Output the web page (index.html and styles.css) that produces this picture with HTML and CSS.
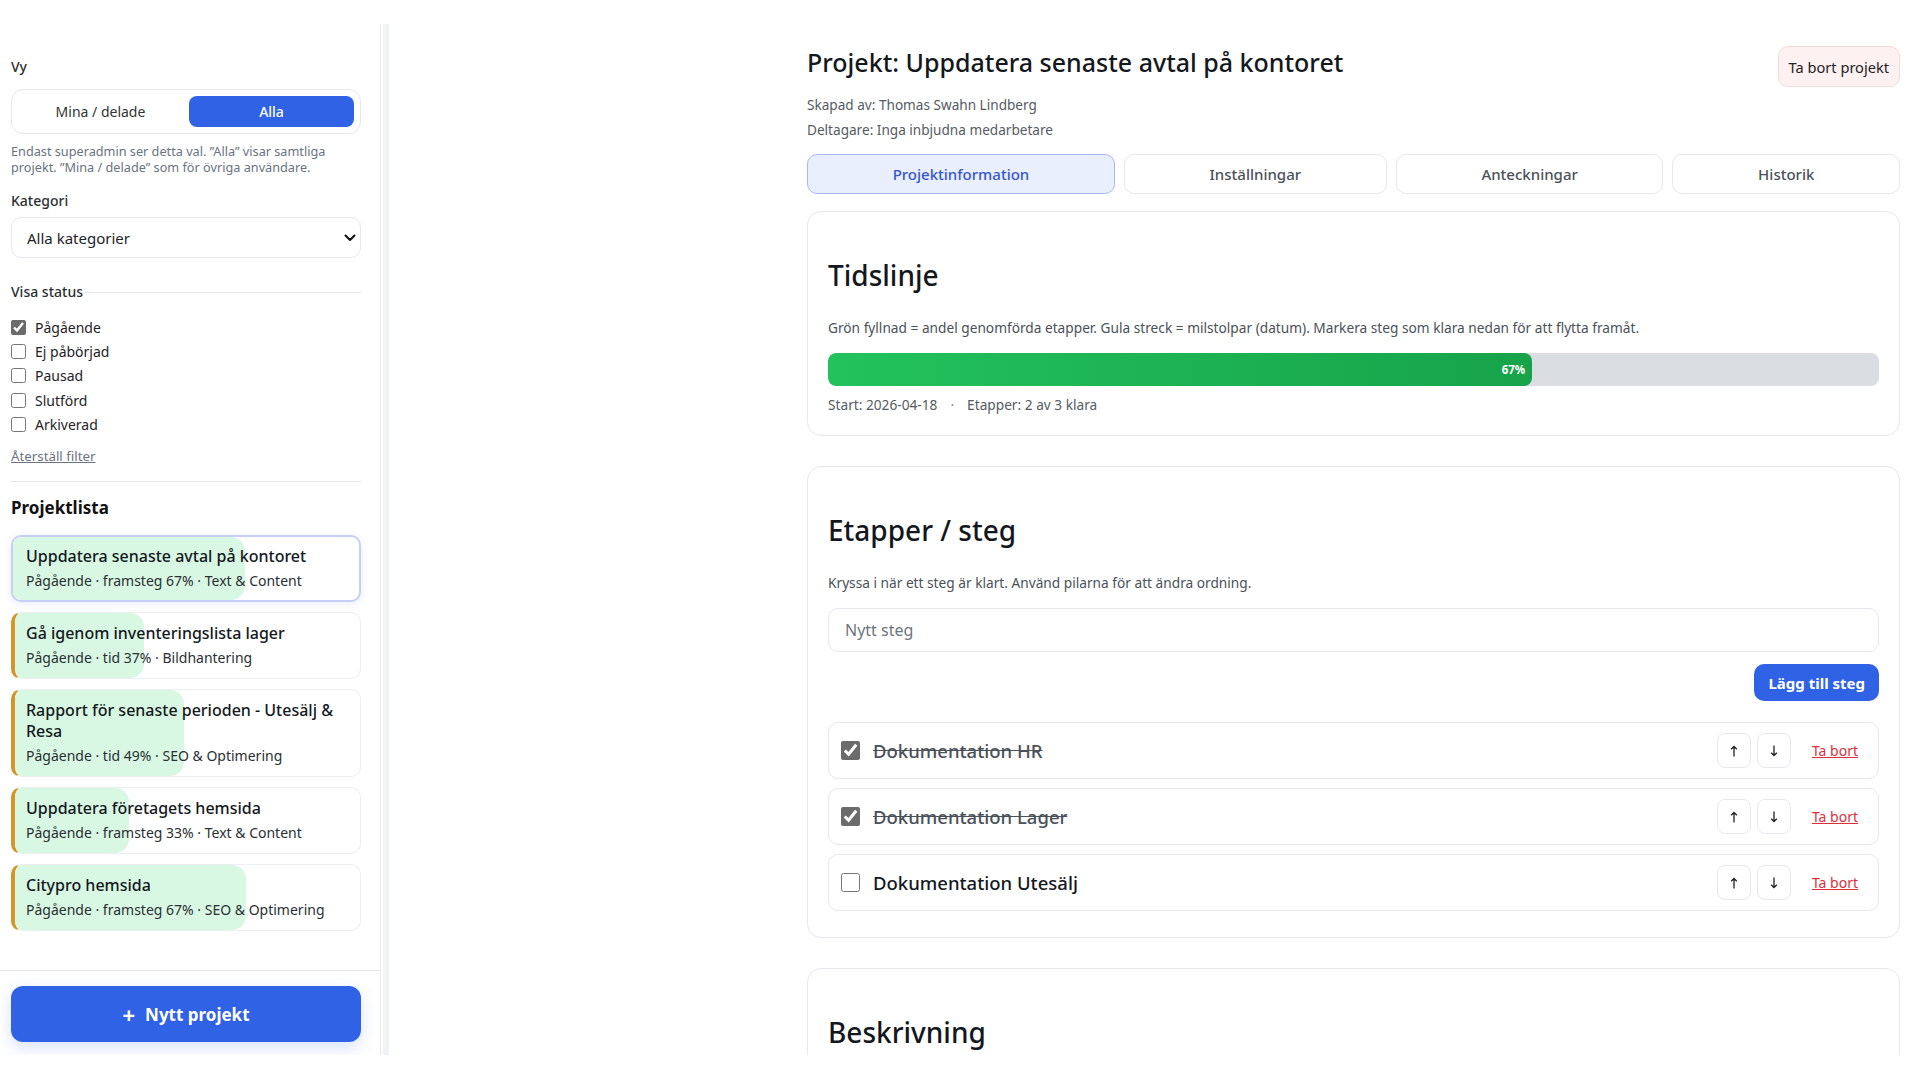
FILE: index.html
```html
<!DOCTYPE html>
<html lang="sv">
<head>
<meta charset="utf-8">
<title>Projekt</title>
<link rel="stylesheet" href="styles.css">
</head>
<body>
<div class="app">
  <aside class="sidebar">
    <div class="side-scroll">
      <div class="label">Vy</div>
      <div class="segmented">
        <button class="seg">Mina / delade</button>
        <button class="seg active">Alla</button>
      </div>
      <p class="help">Endast superadmin ser detta val. ”Alla” visar samtliga projekt. ”Mina / delade” som för övriga användare.</p>

      <div class="label kat">Kategori</div>
      <div class="select-wrap">
        <select class="select"><option>Alla kategorier</option></select>
        <svg class="chev" width="12" height="8" viewBox="0 0 12 8"><path d="M1.5 1.5 6 6l4.5-4.5" fill="none" stroke="#111" stroke-width="2" stroke-linecap="round" stroke-linejoin="round"/></svg>
      </div>

      <fieldset class="status">
        <legend>Visa status</legend>
        <label class="chk"><input type="checkbox" checked> Pågående</label>
        <label class="chk"><input type="checkbox"> Ej påbörjad</label>
        <label class="chk"><input type="checkbox"> Pausad</label>
        <label class="chk"><input type="checkbox"> Slutförd</label>
        <label class="chk"><input type="checkbox"> Arkiverad</label>
      </fieldset>
      <a class="reset" href="#">Återställ filter</a>
      <hr class="sep">

      <h3 class="list-title">Projektlista</h3>
      <div class="plist">
        <div class="pcard active">
          <div class="pfill" style="width:67%"></div>
          <div class="ptitle">Uppdatera senaste avtal på kontoret</div>
          <div class="psub">Pågående · framsteg 67% · Text &amp; Content</div>
        </div>
        <div class="pcard">
          <div class="pfill" style="width:37.5%"></div>
          <div class="ptitle">Gå igenom inventeringslista lager</div>
          <div class="psub">Pågående · tid 37% · Bildhantering</div>
        </div>
        <div class="pcard">
          <div class="pfill" style="width:49%"></div>
          <div class="ptitle">Rapport för senaste perioden - Utesälj &amp; Resa</div>
          <div class="psub">Pågående · tid 49% · SEO &amp; Optimering</div>
        </div>
        <div class="pcard">
          <div class="pfill" style="width:33%"></div>
          <div class="ptitle">Uppdatera företagets hemsida</div>
          <div class="psub">Pågående · framsteg 33% · Text &amp; Content</div>
        </div>
        <div class="pcard">
          <div class="pfill" style="width:67%"></div>
          <div class="ptitle">Citypro hemsida</div>
          <div class="psub">Pågående · framsteg 67% · SEO &amp; Optimering</div>
        </div>
      </div>
    </div>
    <div class="side-foot">
      <button class="new-btn"><span class="plus">+</span>Nytt projekt</button>
    </div>
  </aside>
  <div class="rail"></div>

  <main class="main">
    <div class="content">
      <header class="head">
        <div>
          <h1 class="title">Projekt: Uppdatera senaste avtal på kontoret</h1>
          <div class="meta">
            <div>Skapad av: Thomas Swahn Lindberg</div>
            <div>Deltagare: Inga inbjudna medarbetare</div>
          </div>
        </div>
        <button class="del-btn">Ta bort projekt</button>
      </header>

      <nav class="tabs">
        <button class="tab active">Projektinformation</button>
        <button class="tab">Inställningar</button>
        <button class="tab">Anteckningar</button>
        <button class="tab">Historik</button>
      </nav>

      <section class="card">
        <h2>Tidslinje</h2>
        <p class="desc">Grön fyllnad = andel genomförda etapper. Gula streck = milstolpar (datum). Markera steg som klara nedan för att flytta framåt.</p>
        <div class="bar">
          <div class="bar-fill" style="width:67%"><span>67%</span></div>
        </div>
        <div class="bar-meta"><span>Start: 2026-04-18</span><span class="dot">·</span><span>Etapper: 2 av 3 klara</span></div>
      </section>

      <section class="card">
        <h2>Etapper / steg</h2>
        <p class="desc">Kryssa i när ett steg är klart. Använd pilarna för att ändra ordning.</p>
        <input class="step-input" type="text" placeholder="Nytt steg">
        <div class="add-row"><button class="add-btn">Lägg till steg</button></div>
        <div class="steps">
          <div class="step">
            <input type="checkbox" checked>
            <span class="step-text done">Dokumentation HR</span>
            <div class="step-actions">
              <button class="arrow" aria-label="Upp"><svg width="8" height="12" viewBox="0 0 8 12"><path d="M4 11.5V1.5M1.2 4.3 4 1.5l2.8 2.8" fill="none" stroke="#222" stroke-width="1.3"/></svg></button>
              <button class="arrow" aria-label="Ner"><svg width="8" height="12" viewBox="0 0 8 12"><path d="M4 .5v10M1.2 7.7 4 10.5l2.8-2.8" fill="none" stroke="#222" stroke-width="1.3"/></svg></button>
              <a class="remove" href="#">Ta bort</a>
            </div>
          </div>
          <div class="step">
            <input type="checkbox" checked>
            <span class="step-text done">Dokumentation Lager</span>
            <div class="step-actions">
              <button class="arrow" aria-label="Upp"><svg width="8" height="12" viewBox="0 0 8 12"><path d="M4 11.5V1.5M1.2 4.3 4 1.5l2.8 2.8" fill="none" stroke="#222" stroke-width="1.3"/></svg></button>
              <button class="arrow" aria-label="Ner"><svg width="8" height="12" viewBox="0 0 8 12"><path d="M4 .5v10M1.2 7.7 4 10.5l2.8-2.8" fill="none" stroke="#222" stroke-width="1.3"/></svg></button>
              <a class="remove" href="#">Ta bort</a>
            </div>
          </div>
          <div class="step">
            <input type="checkbox">
            <span class="step-text">Dokumentation Utesälj</span>
            <div class="step-actions">
              <button class="arrow" aria-label="Upp"><svg width="8" height="12" viewBox="0 0 8 12"><path d="M4 11.5V1.5M1.2 4.3 4 1.5l2.8 2.8" fill="none" stroke="#222" stroke-width="1.3"/></svg></button>
              <button class="arrow" aria-label="Ner"><svg width="8" height="12" viewBox="0 0 8 12"><path d="M4 .5v10M1.2 7.7 4 10.5l2.8-2.8" fill="none" stroke="#222" stroke-width="1.3"/></svg></button>
              <a class="remove" href="#">Ta bort</a>
            </div>
          </div>
        </div>
      </section>

      <section class="card">
        <h2>Beskrivning</h2>
        <p class="desc">&nbsp;</p>
      </section>
    </div>
  </main>
</div>
</body>
</html>
```

FILE: styles.css
```css
* { box-sizing: border-box; }
html, body { margin: 0; padding: 0; background: #fff; overflow: hidden; }
body {
  font-family: "Segoe UI", "Noto Sans", "Open Sans", sans-serif;
  color: #1f2328;
}
button, input, select { font-family: inherit; }

.app { display: flex; height: 1055px; overflow: hidden; }

/* Sidebar */
.sidebar {
  width: 381px;
  flex: none;
  margin-top: 24px;
  border-right: 1px solid #e6e8eb;
  display: flex;
  flex-direction: column;
}
.rail { width: 6px; flex: none; margin: 24px 0 0 2px; background: #f1f2f3; }
.side-scroll { flex: 1; overflow: hidden; padding: 33px 19px 0 11px; }
.label { font-size: 14px; line-height: 20px; font-weight: 500; color: #2b2f33; }
.label.kat { margin-top: 16px; }
.segmented {
  margin-top: 12px;
  height: 45px;
  border: 1px solid #e6e8eb;
  border-radius: 12px;
  padding: 6px;
  display: grid;
  grid-template-columns: 1fr 1fr;
  gap: 6px;
}
.seg {
  border: none; background: transparent; border-radius: 8px;
  font-size: 14px; color: #333; cursor: pointer;
}
.seg.active { background: #2f62e4; color: #fff; font-weight: 500; }
.help { margin: 9px 0 0; font-size: 12.7px; line-height: 16px; color: #6b7280; }
.select-wrap { position: relative; margin-top: 6px; }
.select {
  appearance: none; -webkit-appearance: none;
  width: 100%; height: 41px;
  border: 1px solid #e6e8eb; border-radius: 10px;
  background: #fff; padding: 0 15px;
  font-size: 15px; color: #1f2328;
}
.chev { position: absolute; right: 5px; top: 17px; }
.status { margin: 24px 0 0; padding: 0; border: none; border-top: 1px solid #e6e8eb; min-width: 0; }
.status legend { padding: 0 2px 0 0; font-size: 14px; line-height: 20px; font-weight: 500; color: #2b2f33; }
.chk {
  display: flex; align-items: center; gap: 9px;
  height: 24.3px; font-size: 14px; color: #1f2328;
}
.status .chk:first-of-type { margin-top: 13px; }
.chk input { width: 15px; height: 15px; margin: 0; accent-color: #6b6b6b; }
.reset { display: inline-block; margin-top: 10px; font-size: 13.3px; line-height: 20px; color: #6b7280; }
.sep { margin: 15px 0 0; border: none; border-top: 1px solid #e6e8eb; }
.list-title { margin: 14px 0 0; font-size: 17px; line-height: 24px; font-weight: 700; color: #111; }
.plist { margin-top: 15px; display: flex; flex-direction: column; gap: 10px; }
.pcard {
  position: relative;
  overflow: hidden;
  border: 1px solid #eceef1;
  border-left: 4px solid #d4962a;
  border-radius: 10px;
  padding: 10px 12px 10px 11px;
  background: #fff;
}
.pcard.active {
  border: 2px solid #c6cff6;
  padding: 9px 11px 9px 13px;
  box-shadow: 0 2px 8px rgba(80, 100, 220, 0.12);
}
.pfill {
  position: absolute; left: 0; top: 0; bottom: 0;
  background: #d8f8e3;
  border-radius: 0 14px 14px 0;
}
.ptitle, .psub { position: relative; }
.ptitle { font-size: 16px; line-height: 21px; font-weight: 500; color: #15191e; }
.psub { margin-top: 4px; font-size: 14px; line-height: 20px; color: #2b2f33; }
.side-foot { border-top: 1px solid #e6e8eb; padding: 15px 19px 13px 11px; }
.new-btn {
  width: 100%; height: 56px;
  border: none; border-radius: 12px;
  background: #2f62e4; color: #fff;
  font-size: 17px; font-weight: 700;
  box-shadow: 0 6px 16px rgba(47, 98, 228, 0.18);
  display: flex; align-items: center; justify-content: center;
}
.plus { font-size: 22px; font-weight: 700; margin-right: 10px; line-height: 1; }

/* Main */
.main { flex: 1; min-width: 0; padding: 44px 20px 0; overflow: hidden; }
.content { max-width: 1093px; margin-left: auto; }
.head { display: flex; justify-content: space-between; align-items: flex-start; }
.title { margin: 0; font-size: 25px; line-height: 36px; font-weight: 500; color: #14181d; }
.meta { margin-top: 12px; font-size: 13.6px; line-height: 25px; color: #555b62; }
.del-btn {
  margin-top: 2px; height: 41px; padding: 0 10px;
  border: 1px solid #f1dcdc; border-radius: 10px;
  background: #fdf1f1; color: #1f2328; font-size: 14.6px;
}
.tabs { margin-top: 12px; display: flex; gap: 9px; }
.tab {
  flex: 1 1 auto; height: 40px;
  border: 1px solid #e6e8eb; border-radius: 10px;
  background: #fff; color: #4b5158;
  font-size: 15px; font-weight: 500;
}
.tab.active { background: #e9effd; border-color: #a9b7ef; color: #3556d0; }

.card {
  margin-top: 17px;
  border: 1px solid #e6e8eb;
  border-radius: 14px;
  padding: 20px;
}
.card + .card { margin-top: 30px; }
.card h2 { margin: 23px 0; font-size: 28px; line-height: 40px; font-weight: 500; color: #14181d; }
.desc { margin: 0 0 15px; font-size: 13.7px; line-height: 20px; color: #4b5158; }
.bar { height: 33px; border-radius: 8px; background: #dadde2; overflow: hidden; }
.bar-fill {
  height: 100%;
  border-radius: 8px;
  background: linear-gradient(90deg, #22c25c, #17a34a);
  display: flex; align-items: center; justify-content: flex-end;
  padding-right: 7px;
}
.bar-fill span { color: #fff; font-size: 11.5px; font-weight: 700; }
.bar-meta { margin-top: 9px; font-size: 13.7px; line-height: 20px; color: #555b62; display: flex; gap: 13px; }
.dot { color: #888; }

.step-input {
  display: block; width: 100%; height: 44px;
  border: 1px solid #e6e8eb; border-radius: 10px;
  padding: 0 16px; font-size: 16px; color: #222;
}
.step-input::placeholder { color: #6f757c; }
.add-row { display: flex; justify-content: flex-end; margin-top: 12px; }
.add-btn {
  height: 37px; padding: 0 14px;
  border: none; border-radius: 10px;
  background: #2f62e4; color: #fff;
  font-size: 15px; font-weight: 700;
}
.steps { margin: 21px 0 6px; display: flex; flex-direction: column; gap: 9px; }
.step {
  height: 57px;
  display: flex; align-items: center;
  border: 1px solid #e6e8eb; border-radius: 10px;
  padding: 0 20px 0 12px;
}
.step input { width: 19px; height: 19px; margin: 0; accent-color: #6b6b6b; }
.step-text { margin-left: 13px; font-size: 18.5px; font-weight: 500; color: #15191e; }
.step-text.done { text-decoration: line-through; color: #4b5158; }
.step-actions { margin-left: auto; display: flex; align-items: center; gap: 6px; }
.arrow {
  width: 34px; height: 35px;
  border: 1px solid #e6e8eb; border-radius: 8px;
  background: #fff; padding: 0;
  display: flex; align-items: center; justify-content: center;
}
.remove { margin-left: 15px; font-size: 14px; color: #dc2f3a; }
```
